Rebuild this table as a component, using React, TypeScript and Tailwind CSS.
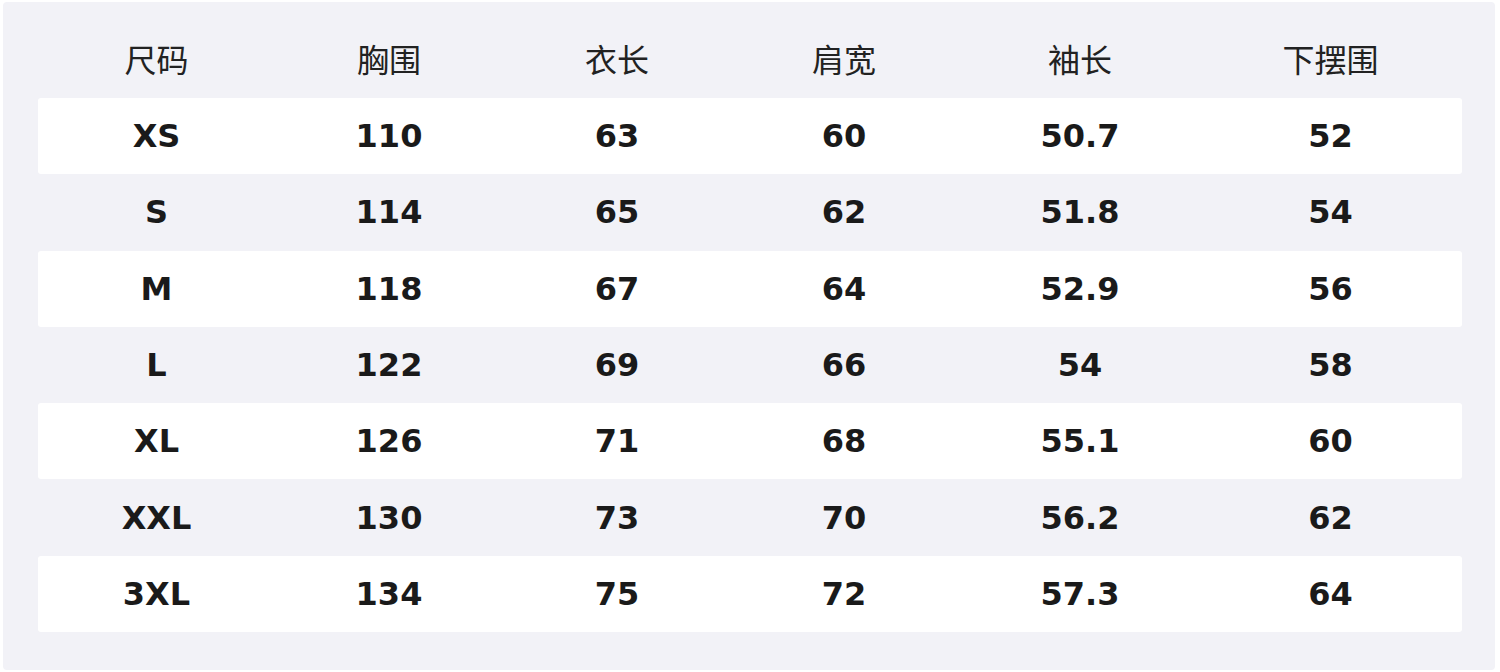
const HEADERS = ['尺码', '胸围', '衣长', '肩宽', '袖长', '下摆围']

const ROWS: string[][] = [
  ['XS', '110', '63', '60', '50.7', '52'],
  ['S', '114', '65', '62', '51.8', '54'],
  ['M', '118', '67', '64', '52.9', '56'],
  ['L', '122', '69', '66', '54', '58'],
  ['XL', '126', '71', '68', '55.1', '60'],
  ['XXL', '130', '73', '70', '56.2', '62'],
  ['3XL', '134', '75', '72', '57.3', '64'],
]

const cols = 'grid grid-cols-[237px_228px_228px_226px_246px_255px]'

export default function App() {
  return (
    <div className="w-[1500px] h-[672px] bg-white pt-[2px] pl-[3px] font-['DejaVu_Sans','Noto_Sans_CJK_SC',sans-serif]">
      <div className="w-[1492px] h-[668px] bg-[#f2f2f7] rounded-[4px] pl-[35px] pr-[33px]">
        <div className={`${cols} h-[96px] pt-[16px] items-center text-[32px] text-[#222]`}>
          {HEADERS.map(h => (
            <div key={h} className="text-center font-['Noto_Sans_CJK_SC',sans-serif] leading-none">
              {h}
            </div>
          ))}
        </div>
        {ROWS.map((row, i) => (
          <div
            key={row[0]}
            className={`${cols} w-[1424px] h-[76.3px] items-center rounded-[3px] text-[32px] font-bold text-[#1a1a1a] ${i % 2 === 0 ? 'bg-white' : ''}`}
          >
            {row.map((cell, j) => (
              <div key={j} className="text-center leading-none">
                {cell}
              </div>
            ))}
          </div>
        ))}
      </div>
    </div>
  )
}
